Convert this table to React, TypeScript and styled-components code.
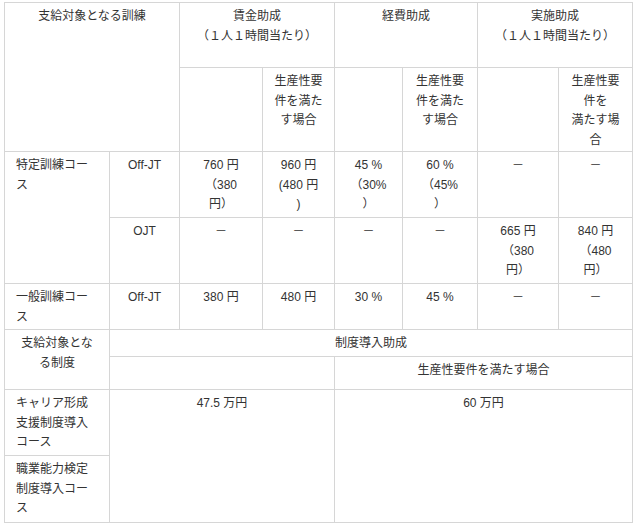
import styled, { createGlobalStyle } from "styled-components";

const GlobalStyle = createGlobalStyle`
  html, body {
    margin: 0;
    padding: 0;
    background: #fff;
  }
  body {
    font-family: "Liberation Sans", "Noto Sans CJK JP", sans-serif;
    color: #333;
  }
`;

const Page = styled.div`
  padding: 2px 0 0 4px;
`;

const Table = styled.table`
  width: 629px;
  border-collapse: collapse;
  table-layout: fixed;
  font-size: 12px;
  line-height: 19.5px;
`;

const Row = styled.tr<{ $h: number }>`
  height: ${(p) => p.$h}px;
`;

const Cell = styled.td<{ $align?: "left" | "center" }>`
  border: 1px solid #d6d6d6;
  padding: 4px 11px 1px;
  vertical-align: top;
  text-align: ${(p) => p.$align ?? "center"};
  word-break: break-all;
  color: #333;
`;

const widths = [105, 70, 83, 72, 68, 75, 81, 74];

const Lines = ({ lines }: { lines: string[] }) => (
  <>
    {lines.map((l, i) => (
      <span key={i}>
        {i > 0 && <br />}
        {l}
      </span>
    ))}
  </>
);

export default function App() {
  return (
    <Page>
      <GlobalStyle />
      <Table>
        <colgroup>
          {widths.map((w, i) => (
            <col key={i} style={{ width: w }} />
          ))}
        </colgroup>
        <tbody>
          <Row $h={65}>
            <Cell colSpan={2} rowSpan={2}>支給対象となる訓練</Cell>
            <Cell colSpan={2}>
              <Lines lines={["賃金助成", "（１人１時間当たり）"]} />
            </Cell>
            <Cell colSpan={2}>経費助成</Cell>
            <Cell colSpan={2}>
              <Lines lines={["実施助成", "（１人１時間当たり）"]} />
            </Cell>
          </Row>
          <Row $h={84}>
            <Cell />
            <Cell>生産性要件を満たす場合</Cell>
            <Cell />
            <Cell>生産性要件を満たす場合</Cell>
            <Cell />
            <Cell>
              <Lines lines={["生産性要件を", "満たす場合"]} />
            </Cell>
          </Row>
          <Row $h={66}>
            <Cell rowSpan={2} $align="left">特定訓練コース</Cell>
            <Cell>Off-JT</Cell>
            <Cell>
              <Lines lines={["760 円", "（380", "円）"]} />
            </Cell>
            <Cell>
              <Lines lines={["960 円", "(480 円", ")"]} />
            </Cell>
            <Cell>
              <Lines lines={["45 %", "（30%", "）"]} />
            </Cell>
            <Cell>
              <Lines lines={["60 %", "（45%", "）"]} />
            </Cell>
            <Cell>－</Cell>
            <Cell>－</Cell>
          </Row>
          <Row $h={66}>
            <Cell>OJT</Cell>
            <Cell>－</Cell>
            <Cell>－</Cell>
            <Cell>－</Cell>
            <Cell>－</Cell>
            <Cell>
              <Lines lines={["665 円", "（380", "円）"]} />
            </Cell>
            <Cell>
              <Lines lines={["840 円", "（480", "円）"]} />
            </Cell>
          </Row>
          <Row $h={46}>
            <Cell $align="left">一般訓練コース</Cell>
            <Cell>Off-JT</Cell>
            <Cell>380 円</Cell>
            <Cell>480 円</Cell>
            <Cell>30 %</Cell>
            <Cell>45 %</Cell>
            <Cell>－</Cell>
            <Cell>－</Cell>
          </Row>
          <Row $h={27}>
            <Cell rowSpan={2}>支給対象となる制度</Cell>
            <Cell colSpan={7}>制度導入助成</Cell>
          </Row>
          <Row $h={33}>
            <Cell colSpan={3} />
            <Cell colSpan={4}>生産性要件を満たす場合</Cell>
          </Row>
          <Row $h={66}>
            <Cell $align="left">キャリア形成支援制度導入コース</Cell>
            <Cell colSpan={3} rowSpan={2}>47.5 万円</Cell>
            <Cell colSpan={4} rowSpan={2}>60 万円</Cell>
          </Row>
          <Row $h={67}>
            <Cell $align="left">職業能力検定制度導入コース</Cell>
          </Row>
        </tbody>
      </Table>
    </Page>
  );
}
